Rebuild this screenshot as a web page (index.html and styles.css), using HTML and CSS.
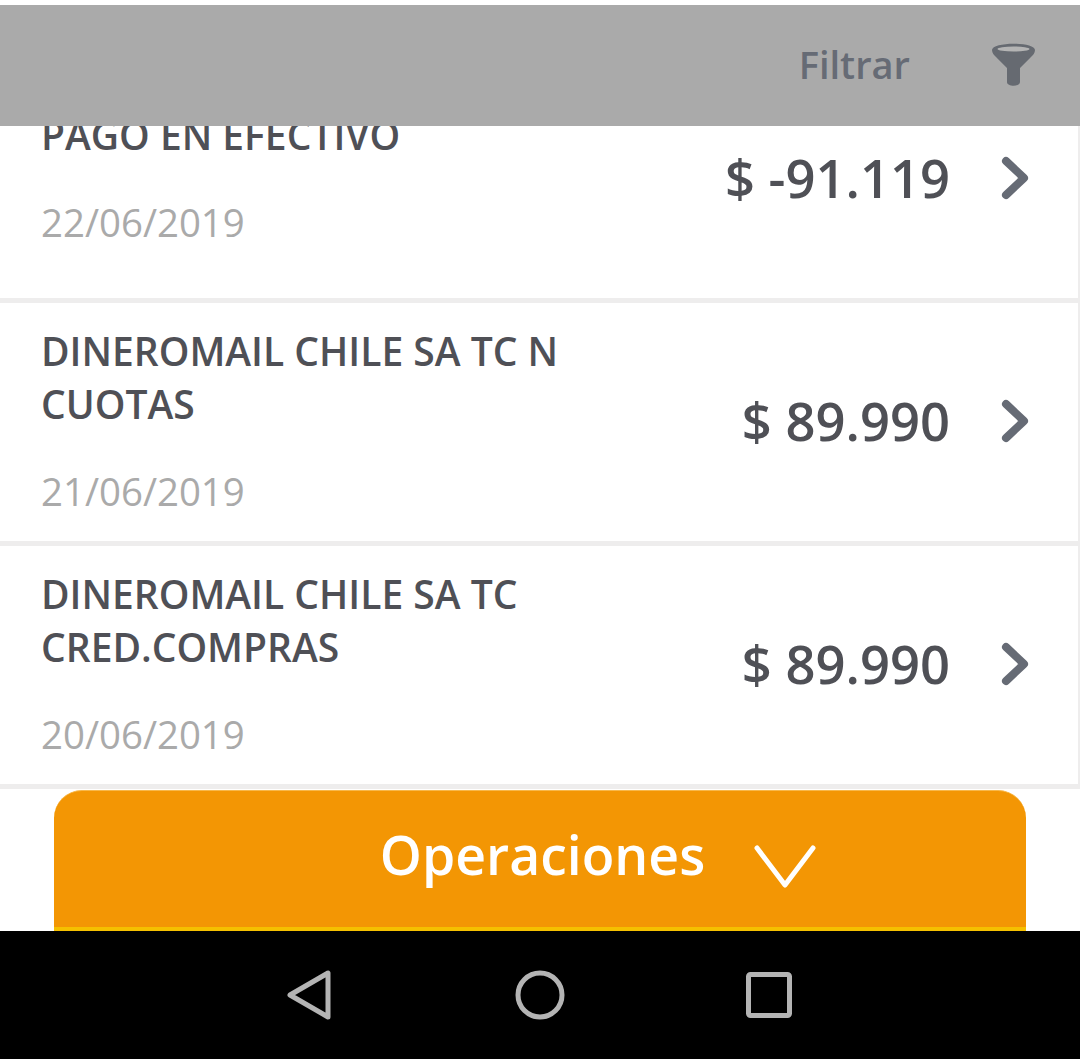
FILE: index.html
```html
<!DOCTYPE html>
<html lang="en">
<head>
  <meta charset="UTF-8">
  <meta name="viewport" content="width=device-width, initial-scale=1.0">
  <title>Movimientos</title>
  <link rel="stylesheet" href="styles.css">
</head>
<body>
  <div id="screen">
    <div id="topbar">
      <span class="filter-label">Filtrar</span>
      <svg class="filter-icon" width="43" height="43" viewBox="0 0 43 43">
        <path d="M0 7 C0 -1.500 43 -1.500 43 7 C43 10 41 12 39 14 L28 25 V39 C28 44 15 44 15 39 V25 L4 14 C2 12 0 10 0 7 Z" fill="#666a71"/>
        <ellipse cx="21.500" cy="6" rx="16" ry="2.500" fill="#b4b4b4"/>
      </svg>
    </div>

    <div id="movements">
      <div class="movement first">
        <div class="info">
          <div class="name">PAGO EN EFECTIVO</div>
          <div class="date">22/06/2019</div>
        </div>
        <div class="amount">$ -91.119</div>
        <svg class="chevron" width="30" height="44" viewBox="0 0 30 44"><path d="M5 5 L23 22 L5 39" fill="none" stroke="#666b75" stroke-width="8" stroke-linecap="round" stroke-linejoin="round"/></svg>
      </div>
      <div class="movement">
        <div class="info">
          <div class="name">DINEROMAIL CHILE SA TC N CUOTAS</div>
          <div class="date">21/06/2019</div>
        </div>
        <div class="amount">$ 89.990</div>
        <svg class="chevron" width="30" height="44" viewBox="0 0 30 44"><path d="M5 5 L23 22 L5 39" fill="none" stroke="#666b75" stroke-width="8" stroke-linecap="round" stroke-linejoin="round"/></svg>
      </div>
      <div class="movement">
        <div class="info">
          <div class="name">DINEROMAIL CHILE SA TC CRED.COMPRAS</div>
          <div class="date">20/06/2019</div>
        </div>
        <div class="amount">$ 89.990</div>
        <svg class="chevron" width="30" height="44" viewBox="0 0 30 44"><path d="M5 5 L23 22 L5 39" fill="none" stroke="#666b75" stroke-width="8" stroke-linecap="round" stroke-linejoin="round"/></svg>
      </div>
    </div>

    <div id="operations">
      <div class="operations-btn">
        <span class="operations-label">Operaciones</span>
        <svg class="operations-arrow" width="62" height="44" viewBox="0 0 62 44"><path d="M3 4 L31 41 L59 4" fill="none" stroke="#fff" stroke-width="5" stroke-linecap="round" stroke-linejoin="round"/></svg>
      </div>
    </div>

    <div id="navbar">
      <svg class="nav-back" width="44" height="50" viewBox="0 0 44 50"><path d="M41 3 V47 L3 25 Z" fill="none" stroke="#b4b4b4" stroke-width="5" stroke-linejoin="round"/></svg>
      <svg class="nav-home" width="50" height="50" viewBox="0 0 50 50"><circle cx="25" cy="25" r="22" fill="none" stroke="#b4b4b4" stroke-width="5"/></svg>
      <svg class="nav-recent" width="46" height="46" viewBox="0 0 46 46"><rect x="2.500" y="2.500" width="41" height="41" rx="2" fill="none" stroke="#b4b4b4" stroke-width="5"/></svg>
    </div>
  </div>
</body>
</html>
```

FILE: styles.css
```css
html,
body {
  margin: 0;
  padding: 0;
  background-color: #fff;
}

#screen {
  width: 1080px;
  height: 1059px;
  display: flex;
  flex-direction: column;
  overflow: hidden;
  padding-top: 5px;
  box-sizing: border-box;
  font-family: "Open Sans", "Noto Sans", sans-serif;
}

/* Header (dimmed) */
#topbar {
  flex: none;
  position: relative;
  z-index: 2;
  height: 121px;
  background-color: #aaaaaa;
  display: flex;
  align-items: center;
  justify-content: flex-end;
  padding-right: 45px;
}

.filter-label {
  font-size: 38px;
  font-weight: 600;
  color: #666b75;
  margin-right: 82px;
  padding-bottom: 4px;
}

.filter-icon {
  overflow: visible;
  margin-bottom: 2px;
}

/* Movements list */
#movements {
  flex: none;
  height: 663px;
  overflow: hidden;
}

.movement {
  height: 238px;
  display: flex;
  align-items: center;
  box-sizing: border-box;
  padding: 0 47px 4px 41px;
  background-color: #fff;
  border-right: 2px solid #eeeded;
  margin-bottom: 5px;
  box-shadow: 0 5px 0 #eeeded;
}

.movement.first {
  margin-top: -66px;
}

.info {
  width: 560px;
  flex: none;
}

.name {
  font-size: 39px;
  font-weight: 600;
  line-height: 53px;
  color: #4f5056;
}

.date {
  font-size: 38.4px;
  line-height: 50px;
  margin-top: 36px;
  color: #aaaaaa;
}

.amount {
  margin-left: auto;
  margin-right: 51px;
  font-size: 52.5px;
  font-weight: 600;
  color: #4f5056;
  white-space: nowrap;
}

.chevron {
  flex: none;
  margin-top: 2px;
}

/* Operations button */
#operations {
  flex: none;
  height: 142px;
  padding: 1px 54px 0;
  box-sizing: border-box;
}

.operations-btn {
  height: 141px;
  box-sizing: border-box;
  background-color: #f39604;
  border-top: 1px solid #f8b84a;
  border-bottom: 4px solid #f5c000;
  border-radius: 28px 28px 0 0;
  display: flex;
  align-items: center;
  justify-content: center;
  padding: 0 0 6px 116px;
  color: #fff;
  gap: 52px;
}

.operations-label {
  font-size: 53.5px;
  font-weight: 600;
  margin-bottom: 4px;
}

.operations-arrow {
  margin-top: 20px;
  margin-left: -3px;
}

/* Android nav */
#navbar {
  flex: 1;
  background-color: #000;
  display: flex;
  align-items: center;
  padding-left: 287px;
}

.nav-home {
  margin-left: 184px;
}

.nav-recent {
  margin-left: 181px;
}
```
